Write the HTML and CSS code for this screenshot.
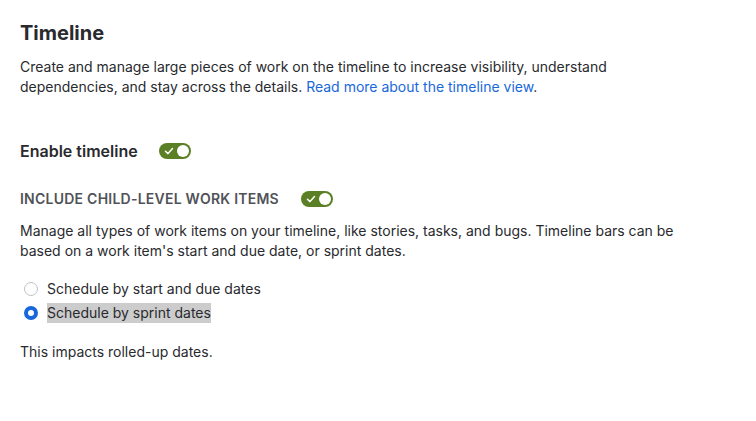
FILE: index.html
```html
<!DOCTYPE html>
<html>
<head>
<meta charset="utf-8">
<link rel="stylesheet" href="styles.css">
</head>
<body>
<main class="page">
  <h1 class="title">Timeline</h1>
  <p class="desc">Create and manage large pieces of work on the timeline to increase visibility, understand dependencies, and stay across the details. <a class="link" href="#">Read more about the timeline view</a>.</p>

  <div class="row enable">
    <span class="enable-label">Enable timeline</span>
    <span class="toggle"><svg class="check" viewBox="0 0 12 12" width="12" height="12"><path d="M2.5 6.2 L5 8.6 L9.5 3.6" fill="none" stroke="#fff" stroke-width="1.5" stroke-linecap="round" stroke-linejoin="round"/></svg><span class="knob"></span></span>
  </div>

  <div class="row child">
    <span class="child-label">INCLUDE CHILD-LEVEL WORK ITEMS</span>
    <span class="toggle"><svg class="check" viewBox="0 0 12 12" width="12" height="12"><path d="M2.5 6.2 L5 8.6 L9.5 3.6" fill="none" stroke="#fff" stroke-width="1.5" stroke-linecap="round" stroke-linejoin="round"/></svg><span class="knob"></span></span>
  </div>

  <p class="desc2">Manage all types of work items on your timeline, like stories, tasks, and bugs. Timeline bars can be based on a work item's start and due date, or sprint dates.</p>

  <div class="radios">
    <label class="radio"><span class="dot"></span><span class="radio-text">Schedule by start and due dates</span></label>
    <label class="radio"><span class="dot on"></span><span class="radio-text sel">Schedule by sprint dates</span></label>
  </div>

  <p class="note">This impacts rolled-up dates.</p>
</main>
</body>
</html>
```

FILE: styles.css
```css
* { box-sizing: border-box; }
html, body { margin: 0; padding: 0; background: #fff; }
body {
  font-family: Inter, "Noto Sans", sans-serif;
  color: #292a2e;
  font-size: 14px;
  line-height: 20px;
}
.page {
  padding: 21px 20px 0 20px;
  width: 700px;
}
.title {
  margin: 0;
  font-size: 20px;
  line-height: 24px;
  font-weight: 700;
  color: #292a2e;
}
.desc {
  margin: 12px 0 0 0;
  width: 620px;
}
.link { color: #1868db; text-decoration: none; }
.row {
  display: flex;
  align-items: center;
}
.enable { margin-top: 44px; height: 20px; }
.enable-label {
  font-size: 16px;
  font-weight: 600;
  line-height: 20px;
  margin-right: 21px;
}
.child { margin-top: 28px; height: 20px; }
.child-label {
  font-size: 14px;
  line-height: 20px;
  font-weight: 600;
  letter-spacing: 0.24px;
  color: #505258;
  margin-right: 22px;
}
.toggle {
  position: relative;
  display: inline-flex;
  align-items: center;
  width: 32px;
  height: 16px;
  border-radius: 8px;
  background: #5b7f24;
  padding-left: 4px;
}
.check { display: block; }
.knob {
  position: absolute;
  right: 2px;
  top: 2px;
  width: 12px;
  height: 12px;
  border-radius: 50%;
  background: #fff;
}
.desc2 {
  margin: 12px 0 0 0;
  width: 680px;
}
.radios {
  margin-top: 18px;
  display: flex;
  flex-direction: column;
  gap: 4px;
}
.radio {
  display: flex;
  align-items: center;
  height: 20px;
}
.dot {
  width: 14px;
  height: 14px;
  border-radius: 50%;
  border: 1px solid #c1c3c7;
  margin: 0 9px 0 4px;
  background: #fff;
  flex: none;
}
.dot.on {
  border: 4px solid #1868db;
}
.radio-text { line-height: 20px; }
.sel { background: #cccccc; }
.note { margin: 19px 0 0 0; }
```
